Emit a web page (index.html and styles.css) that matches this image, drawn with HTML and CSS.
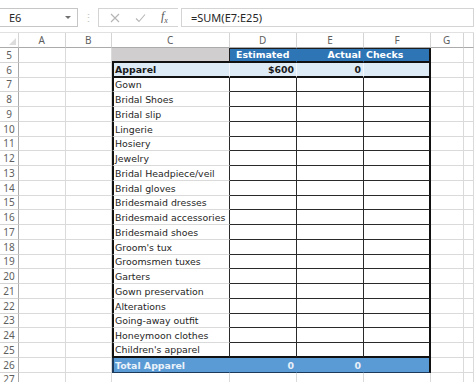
FILE: index.html
```html
<!DOCTYPE html>
<html lang="en">
<head>
    <meta charset="UTF-8">
    <meta name="viewport" content="width=device-width, initial-scale=1.0">
    <title>Wedding Budget - Apparel</title>
    <link rel="stylesheet" href="styles.css">
</head>
<body>
    <div class="formula-bar">
        <div class="name-box">
            <span>E6</span>
            <span class="arrow"></span>
        </div>
        <div class="grip">&#8942;</div>
        <div class="fx-box">
            <svg width="10" height="10" viewBox="0 0 10 10"><path d="M1 1L9 9M9 1L1 9" stroke="#b5b5b5" stroke-width="1.1" fill="none"/></svg>
            <svg width="11" height="10" viewBox="0 0 11 10"><path d="M1 5.5L4 8.5L10 1.5" stroke="#b5b5b5" stroke-width="1.1" fill="none"/></svg>
            <span class="fx">f<sub>x</sub></span>
        </div>
        <div class="formula">=SUM(E7:E25)</div>
    </div>

    <div class="sheet" id="sheet">
        <div class="corner"><span class="tri"></span></div>
        <div class="col-head">A</div>
        <div class="col-head">B</div>
        <div class="col-head">C</div>
        <div class="col-head">D</div>
        <div class="col-head">E</div>
        <div class="col-head">F</div>
        <div class="col-head">G</div>
        <div class="col-head"></div>
    </div>

    <script>
        const items = [
            'Gown', 'Bridal Shoes', 'Bridal slip', 'Lingerie', 'Hosiery', 'Jewelry',
            'Bridal Headpiece/veil', 'Bridal gloves', 'Bridesmaid dresses',
            'Bridesmaid accessories', 'Bridesmaid shoes', "Groom's tux",
            'Groomsmen tuxes', 'Garters', 'Gown preservation', 'Alterations',
            'Going-away outfit', 'Honeymoon clothes', "Children's apparel"
        ];

        // cells C..F for each row: [text, class]
        function rowCells(r) {
            if (r === 5) return [['', 'gray'], ['Estimated', 'blue center'], ['Actual', 'blue right'], ['Checks', 'blue last']];
            if (r === 6) return [['Apparel', 'label top'], ['$600', 'light right'], ['0', 'light right'], ['', 'light last']];
            if (r >= 7 && r <= 25) {
                const end = r === 25 ? ' end' : '';
                return [[items[r - 7], 'label item' + end], ['', 'box' + end], ['', 'box' + end], ['', 'box last' + end]];
            }
            if (r === 26) return [['Total Apparel', 'label total'], ['0', 'total right'], ['0', 'total right'], ['', 'total last']];
            return [['', ''], ['', ''], ['', ''], ['', '']];
        }

        const sheet = document.getElementById('sheet');
        let html = '';
        for (let r = 5; r <= 27; r++) {
            html += `<div class="row-head">${r}</div><div class="cell"></div><div class="cell"></div>`;
            rowCells(r).forEach(([text, cls]) => {
                html += `<div class="cell ${cls}">${text}</div>`;
            });
            html += `<div class="cell"></div><div class="cell"></div>`;
        }
        sheet.insertAdjacentHTML('beforeend', html);
    </script>
</body>
</html>
```

FILE: styles.css
```css
body {
    margin: 0;
    padding: 0;
    background: #fff;
    overflow: hidden;
    font-family: "DejaVu Sans", Verdana, sans-serif;
}

/* formula bar */
.formula-bar {
    height: 33px;
    box-sizing: border-box;
    display: flex;
    align-items: flex-start;
    padding-top: 8px;
    background: #fff;
    border-bottom: 1px solid #e1e1e1;
    font-family: "Noto Sans", "Open Sans", sans-serif;
    font-size: 11px;
    color: #262626;
}

.name-box {
    width: 79px;
    height: 19px;
    box-sizing: border-box;
    margin-left: -1px;
    border: 1px solid #c6c6c6;
    display: flex;
    align-items: center;
    justify-content: space-between;
    padding: 0 6px 0 9px;
}

.arrow {
    width: 0;
    height: 0;
    border-left: 3px solid transparent;
    border-right: 3px solid transparent;
    border-top: 3px solid #707070;
}

.grip {
    width: 20px;
    text-align: center;
    color: #c4c4c4;
    line-height: 19px;
}

.fx-box {
    width: 80px;
    height: 19px;
    box-sizing: border-box;
    border: 1px solid #d4d4d4;
    border-right: none;
    display: flex;
    align-items: center;
    gap: 15px;
    padding-left: 11px;
}

.fx {
    font-family: "Liberation Serif", serif;
    font-style: italic;
    font-size: 12px;
    color: #555;
}

.fx sub {
    font-size: 8px;
}

.formula {
    flex: 1;
    height: 19px;
    box-sizing: border-box;
    border: 1px solid #d4d4d4;
    margin-left: 3px;
    padding-left: 9px;
    line-height: 17px;
}

/* sheet grid */
.sheet {
    display: grid;
    grid-template-columns: 19px 46.5px 46.5px 117.5px 67.5px 67px 67px 32.5px 1fr;
    grid-template-rows: 15px;
    grid-auto-rows: 14.75px;
    font-size: 9.4px;
    color: #1a1a1a;
}

.corner, .col-head, .row-head {
    box-sizing: border-box;
    border-right: 1px solid #d4d4d4;
    border-bottom: 1px solid #ababab;
    font-family: "Noto Sans", "Open Sans", sans-serif;
    font-size: 10px;
    color: #5e5e5e;
    display: flex;
    align-items: center;
    justify-content: center;
}

.corner {
    justify-content: flex-end;
    align-items: flex-end;
    padding: 0 2px 2px 0;
}

.tri {
    width: 0;
    height: 0;
    border-left: 7px solid transparent;
    border-bottom: 7px solid #dcdcdc;
}

.row-head {
    border-right: 1px solid #ababab;
    border-bottom: 1px solid #d4d4d4;
}

.cell {
    box-sizing: border-box;
    border-right: 1px solid #dadada;
    border-bottom: 1px solid #dadada;
    padding: 0 2px 1px;
    display: flex;
    align-items: flex-end;
    white-space: nowrap;
    overflow: visible;
}

.gray {
    background: #d0cece;
    border-right-color: #1e1e1e;
    border-bottom: 2px solid #111;
}

.blue {
    background: #2e75b6;
    color: #fff;
    font-weight: bold;
    border-top: 1px solid #1e1e1e;
    border-right-color: #2e75b6;
    border-bottom: 2px solid #111;
}

.center { justify-content: center; }
.right { justify-content: flex-end; }

.label {
    border-left: 2px solid #111;
    padding-left: 1px;
}

.top {
    background: #ddebf7;
    font-weight: bold;
    border-right-color: #f4f8fc;
    border-bottom: 2px solid #111;
}

.light {
    background: #ddebf7;
    font-weight: bold;
    border-right-color: #f4f8fc;
    border-bottom: 2px solid #111;
}

.item {
    border-right-color: #2a2a2a;
    color: #262626;
}

.box {
    border-right-color: #2a2a2a;
    border-bottom-color: #2a2a2a;
}

.cell.last {
    border-right: 2px solid #111;
}

.cell.end {
    border-bottom: 2px solid #111;
}

.total {
    background: #5b9bd5;
    color: #fff;
    font-weight: bold;
    border-right-color: #5b9bd5;
    border-bottom-color: #1e3a5a;
}

.label.total {
    border-left-color: #1e3a5a;
    color: #eaf2fa;
}

.total.right {
    color: #e8f0f8;
}
```
